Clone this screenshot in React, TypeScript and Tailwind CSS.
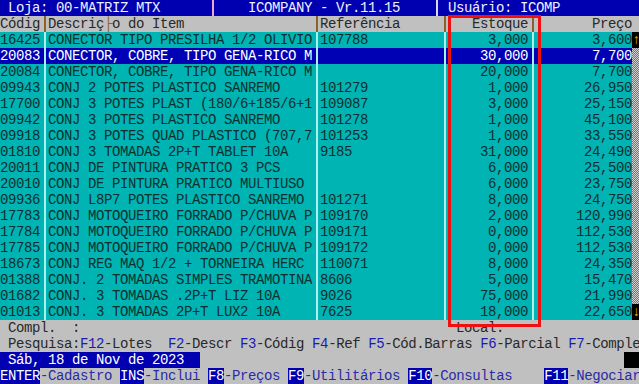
import React from 'react';

const FONT = "font-['Liberation_Mono','DejaVu_Sans_Mono',monospace] text-[14px] tracking-[-0.4px] leading-[16px]";

interface Item {
  code: string;
  desc: string;
  ref: string;
  stock: string;
  price: string;
}

const items: Item[] = [
  { code: '16425', desc: 'CONECTOR TIPO PRESILHA 1/2 OLIVIO', ref: '107788', stock: '3,000', price: '3,600' },
  { code: '20083', desc: 'CONECTOR, COBRE, TIPO GENA-RICO M', ref: '', stock: '30,000', price: '7,700' },
  { code: '20084', desc: 'CONECTOR, COBRE, TIPO GENA-RICO M', ref: '', stock: '20,000', price: '7,700' },
  { code: '09943', desc: 'CONJ 2 POTES PLASTICO SANREMO', ref: '101279', stock: '1,000', price: '26,950' },
  { code: '17700', desc: 'CONJ 3 POTES PLAST (180/6+185/6+1', ref: '109087', stock: '3,000', price: '25,150' },
  { code: '09942', desc: 'CONJ 3 POTES PLASTICO SANREMO', ref: '101278', stock: '1,000', price: '45,100' },
  { code: '09918', desc: 'CONJ 3 POTES QUAD PLASTICO (707,7', ref: '101253', stock: '1,000', price: '33,550' },
  { code: '01810', desc: 'CONJ 3 TOMADAS 2P+T TABLET 10A', ref: '9185', stock: '31,000', price: '24,490' },
  { code: '20011', desc: 'CONJ DE PINTURA PRATICO 3 PCS', ref: '', stock: '6,000', price: '25,500' },
  { code: '20010', desc: 'CONJ DE PINTURA PRATICO MULTIUSO', ref: '', stock: '6,000', price: '23,750' },
  { code: '09936', desc: 'CONJ L8P7 POTES PLASTICO SANREMO', ref: '101271', stock: '8,000', price: '24,750' },
  { code: '17783', desc: 'CONJ MOTOQUEIRO FORRADO P/CHUVA P', ref: '109170', stock: '2,000', price: '120,990' },
  { code: '17784', desc: 'CONJ MOTOQUEIRO FORRADO P/CHUVA P', ref: '109171', stock: '0,000', price: '112,530' },
  { code: '17785', desc: 'CONJ MOTOQUEIRO FORRADO P/CHUVA P', ref: '109172', stock: '0,000', price: '112,530' },
  { code: '18673', desc: 'CONJ REG MAQ 1/2 + TORNEIRA HERC', ref: '110071', stock: '8,000', price: '24,350' },
  { code: '01388', desc: 'CONJ. 2 TOMADAS SIMPLES TRAMOTINA', ref: '8606', stock: '5,000', price: '15,470' },
  { code: '01682', desc: 'CONJ. 3 TOMADAS .2P+T LIZ 10A', ref: '9026', stock: '75,000', price: '21,990' },
  { code: '01013', desc: 'CONJ. 3 TOMADAS 2P+T LUX2 10A', ref: '7625', stock: '18,000', price: '22,650' },
];

function Sep({ line }: { line: string }) {
  return (
    <div className="w-[8px] h-[16px] shrink-0 flex justify-end pr-[2px]">
      <div className={`w-[2px] h-full ${line}`} />
    </div>
  );
}

function ScrollCell({ index, total }: { index: number; total: number }) {
  if (index === 0 || index === total - 1) {
    return (
      <div className="w-[8px] h-[16px] shrink-0 bg-black text-[#e8b000] text-center overflow-hidden">
        {index === 0 ? '↑' : '↓'}
      </div>
    );
  }
  return (
    <div className="w-[8px] h-[16px] shrink-0 bg-[#c8c8c8] bg-[repeating-conic-gradient(#e04848_0%_25%,#d0d0d0_0%_50%)] bg-[length:2px_2px]" />
  );
}

function Key({ k, label }: { k: string; label: string }) {
  return (
    <>
      <span className="bg-[#0000b0] text-white whitespace-pre">{k}</span>
      <span className="text-[#2a2aa8] whitespace-pre">{label}</span>
    </>
  );
}

function Fn({ k, label }: { k: string; label: string }) {
  return (
    <>
      <span className="text-[#1a1ab0] whitespace-pre">{k}</span>
      <span className="whitespace-pre">{label}</span>
    </>
  );
}

export default function App() {
  return (
    <div className={`w-[639px] h-[384px] overflow-hidden relative bg-[#c0c0c0] ${FONT}`}>
      <div className="w-[640px] flex flex-col">
        {/* title bar */}
        <div className="h-[16px] flex bg-[#0000b0] text-[#f0f0ff]">
          <span className="w-[208px] shrink-0 whitespace-pre"> Loja: 00-MATRIZ MTX</span>
          <Sep line="bg-[#f0a8c8]" />
          <span className="w-[216px] shrink-0 whitespace-pre">    ICOMPANY - Vr.11.15</span>
          <Sep line="bg-[#d8d8ff]" />
          <span className="flex-1 whitespace-pre"> Usuário: ICOMP</span>
        </div>

        {/* column headers */}
        <div className="h-[16px] flex bg-[#c0c0c0] text-[#282828]">
          <span className="w-[40px] shrink-0 whitespace-pre overflow-hidden">Códig</span>
          <Sep line="bg-[#8a6230]" />
          <span className="w-[264px] shrink-0 whitespace-pre overflow-hidden">
            Descriç<span className="text-[#8a6230]">├</span>o do Item
          </span>
          <Sep line="bg-[#8a6230]" />
          <span className="w-[120px] shrink-0 whitespace-pre overflow-hidden">Referência</span>
          <Sep line="bg-[#8a6230]" />
          <span className="w-[80px] shrink-0 text-right whitespace-pre">Estoque</span>
          <Sep line="bg-[#8a6230]" />
          <span className="w-[96px] shrink-0 text-right whitespace-pre">Preço</span>
          <span className="w-[8px] shrink-0" />
        </div>

        {/* rows */}
        {items.map((it, i) => {
          const selected = i === 1;
          return (
            <div
              key={it.code + i}
              className={`h-[16px] flex ${selected ? 'bg-[#0000b4] text-white' : 'bg-[#00b4b4] text-[#0c3030]'}`}
            >
              <span className="w-[40px] shrink-0 whitespace-pre overflow-hidden">{it.code}</span>
              <Sep line="bg-[#a8f0f0]" />
              <span className="w-[264px] shrink-0 whitespace-pre overflow-hidden">{it.desc}</span>
              <Sep line="bg-[#a8f0f0]" />
              <span className="w-[120px] shrink-0 whitespace-pre overflow-hidden">{it.ref}</span>
              <Sep line="bg-[#a8f0f0]" />
              <span className="w-[80px] shrink-0 text-right whitespace-pre">{it.stock}</span>
              <Sep line="bg-[#a8f0f0]" />
              <span className="w-[96px] shrink-0 text-right whitespace-pre">{it.price}</span>
              <ScrollCell index={i} total={items.length} />
            </div>
          );
        })}

        {/* footer */}
        <div className="h-[16px] flex text-[#282828]">
          <span className="w-[456px] shrink-0 whitespace-pre"> Compl.  :</span>
          <span className="whitespace-pre">Local:</span>
        </div>
        <div className="h-[16px] flex text-[#282828]">
          <span className="whitespace-pre"> Pesquisa:</span>
          <Fn k="F12" label="-Lotes  " />
          <Fn k="F2" label="-Descr " />
          <Fn k="F3" label="-Códig " />
          <Fn k="F4" label="-Ref " />
          <Fn k="F5" label="-Cód.Barras " />
          <Fn k="F6" label="-Parcial " />
          <Fn k="F7" label="-Comple" />
        </div>
        <div className="h-[16px] flex">
          <span className="w-[200px] shrink-0 bg-[#0000b0] text-white whitespace-pre"> Sáb, 18 de Nov de 2023</span>
          <span className="flex-1" />
          <span className="w-[15px] shrink-0 bg-black" />
          <span className="w-[1px] shrink-0" />
        </div>
        <div className="h-[16px] flex">
          <Key k="ENTER" label="-Cadastro " />
          <Key k="INS" label="-Inclui " />
          <Key k="F8" label="-Preços " />
          <Key k="F9" label="-Utilitários " />
          <Key k="F10" label="-Consultas    " />
          <Key k="F11" label="-Negociar" />
        </div>
      </div>

      {/* red highlight drawn over the stock column */}
      <div className="absolute left-[448px] top-[15px] w-[93px] h-[312px] border-[3px] border-[#f01010] pointer-events-none" />
    </div>
  );
}
